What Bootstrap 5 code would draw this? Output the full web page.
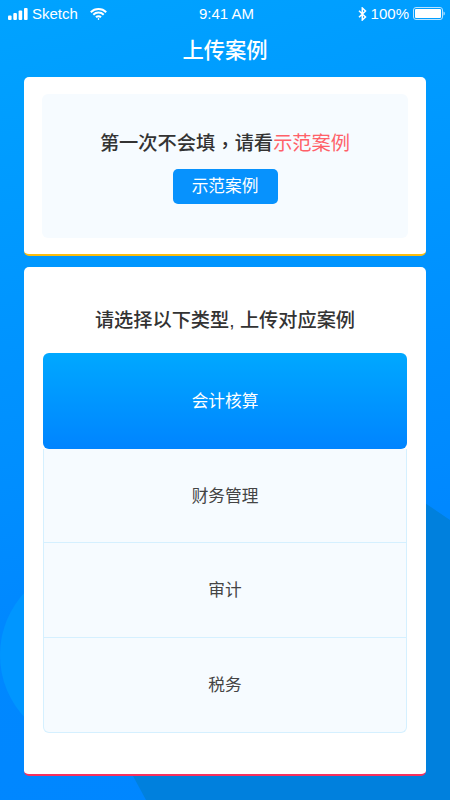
<!DOCTYPE html>
<html lang="zh-CN">
<head>
<meta charset="utf-8">
<title>上传案例</title>
<link rel="stylesheet" href="https://cdn.jsdelivr.net/npm/bootstrap@5.3.0/dist/css/bootstrap.min.css">
<style>
html,body{height:100%;}
body{background:#0090ff;font-family:"Liberation Sans","Noto Sans CJK SC",sans-serif;color:#333;overflow:hidden;}
.screen{width:450px;height:800px;overflow:hidden;background:linear-gradient(165deg,#00a3ff 0%,#0088ff 68%,#0086ff 100%);}
.bg-art{position:absolute;left:0;top:0;width:450px;height:800px;}
.content-wrap{z-index:1;}
.status-row{height:27px;padding:0 5px 0 8px;color:#fff;font-size:15px;line-height:27px;}
.status-side{width:140px;}
.page-title{height:50px;margin:0;font-size:21.300px;font-weight:500;line-height:48px;color:#fff;text-align:center;}
.sheet{margin:0 24px;background:#fff;border-radius:5px;}
.sheet-gold{height:179px;padding:17px 18px;border-bottom:2px solid #fcbd0e;}
.sheet-rose{height:508.500px;margin-top:11px;padding:0 19px;border-bottom:2px solid #f7305e;}
.intro-panel{height:144px;background:#f6fbff;border-radius:6px;padding-top:36px;}
.intro-line{font-size:19.250px;line-height:28px;margin:0 0 11px;color:#333;font-weight:500;}
.intro-line span{color:#ff6068;font-weight:400;}
.intro-line .mid-comma{display:inline-block;width:1em;color:#333;font-weight:500;font-family:"Noto Sans CJK TC",sans-serif;line-height:1;vertical-align:-3px;text-align:center;}
.demo-btn{width:105px;height:35px;padding:0;font-size:16.700px;line-height:35px;color:#fff;background:#0792fd;border:0;border-radius:5px;}
.pick-title{margin:0;height:85.500px;padding-top:40px;font-size:19.200px;line-height:28px;font-weight:500;color:#333;text-align:center;}
.pick-list{--bs-list-group-border-radius:6px;font-size:16.700px;}
.pick-item{height:94.700px;padding:0;line-height:96px;text-align:center;color:#444;background:#f6fbff;border:1px solid #d5f0ff;border-top-width:0;}
.pick-item.active{height:96px;margin:0;line-height:98px;border:0;color:#fff;background:linear-gradient(180deg,#00a8ff,#0084ff);border-radius:6px;}
</style>
</head>
<body>
<div class="screen position-relative">
<svg class="bg-art" viewBox="0 0 450 800" aria-hidden="true">
<circle cx="92" cy="655" r="92" fill="#0096ff"/>
<path d="M450 520L425 503L120 752L146 800H450Z" fill="#0080dd"/>
</svg>
<div class="content-wrap position-relative">
<div class="status-row d-flex align-items-center justify-content-between">
<div class="status-side d-flex align-items-center gap-1">
<svg width="20" height="12" viewBox="0 0 20 12" fill="#fff"><rect x="0" y="7.500" width="3.600" height="4.500" rx="1"/><rect x="5.300" y="5" width="3.600" height="7" rx="1"/><rect x="10.600" y="2.500" width="3.600" height="9.500" rx="1"/><rect x="16" y="0" width="3.600" height="12" rx="1"/></svg>
<span class="status-label">Sketch</span>
<svg class="ms-2" width="17" height="12" viewBox="0 0 17 12" fill="none" stroke="#fff" stroke-width="2"><path d="M.8 4.200a11 11 0 0 1 15.400 0"/><path d="M3.300 6.800a7.300 7.300 0 0 1 10.400 0"/><path d="M6 9.300a3.500 3.500 0 0 1 5 0"/><circle cx="8.500" cy="11" r=".5" fill="#fff" stroke-width="1"/></svg>
</div>
<span>9:41 AM</span>
<div class="status-side d-flex align-items-center justify-content-end gap-1">
<svg width="9" height="14" viewBox="0 0 9 14" fill="none" stroke="#fff" stroke-width="1.500"><path d="M1 3.800L7.500 10L4.300 13V1L7.500 4L1 10.200"/></svg>
<span>100%</span>
<svg width="32" height="13" viewBox="0 0 32 13"><rect x=".5" y=".5" width="29" height="12" rx="2.500" fill="none" stroke="#b8e3ff"/><rect x="2" y="2" width="26" height="9" rx="1" fill="#fff"/><path d="M30.500 4.500c.9.200 1.300 1 1.300 2s-.4 1.800-1.300 2z" fill="#b8e3ff"/></svg>
</div>
</div>
<h1 class="page-title">上传案例</h1>
<section class="sheet sheet-gold">
<div class="intro-panel text-center">
<p class="intro-line">第一次不会填<span class="mid-comma" lang="zh-TW">，</span>请看<span>示范案例</span></p>
<button type="button" class="btn demo-btn">示范案例</button>
</div>
</section>
<section class="sheet sheet-rose">
<h2 class="pick-title">请选择以下类型, 上传对应案例</h2>
<div class="list-group pick-list">
<a class="list-group-item active pick-item">会计核算</a>
<a class="list-group-item pick-item">财务管理</a>
<a class="list-group-item pick-item">审计</a>
<a class="list-group-item pick-item">税务</a>
</div>
</section>
</div>
</div>
<script src="https://cdn.jsdelivr.net/npm/bootstrap@5.3.0/dist/js/bootstrap.bundle.min.js"></script>
</body>
</html>
